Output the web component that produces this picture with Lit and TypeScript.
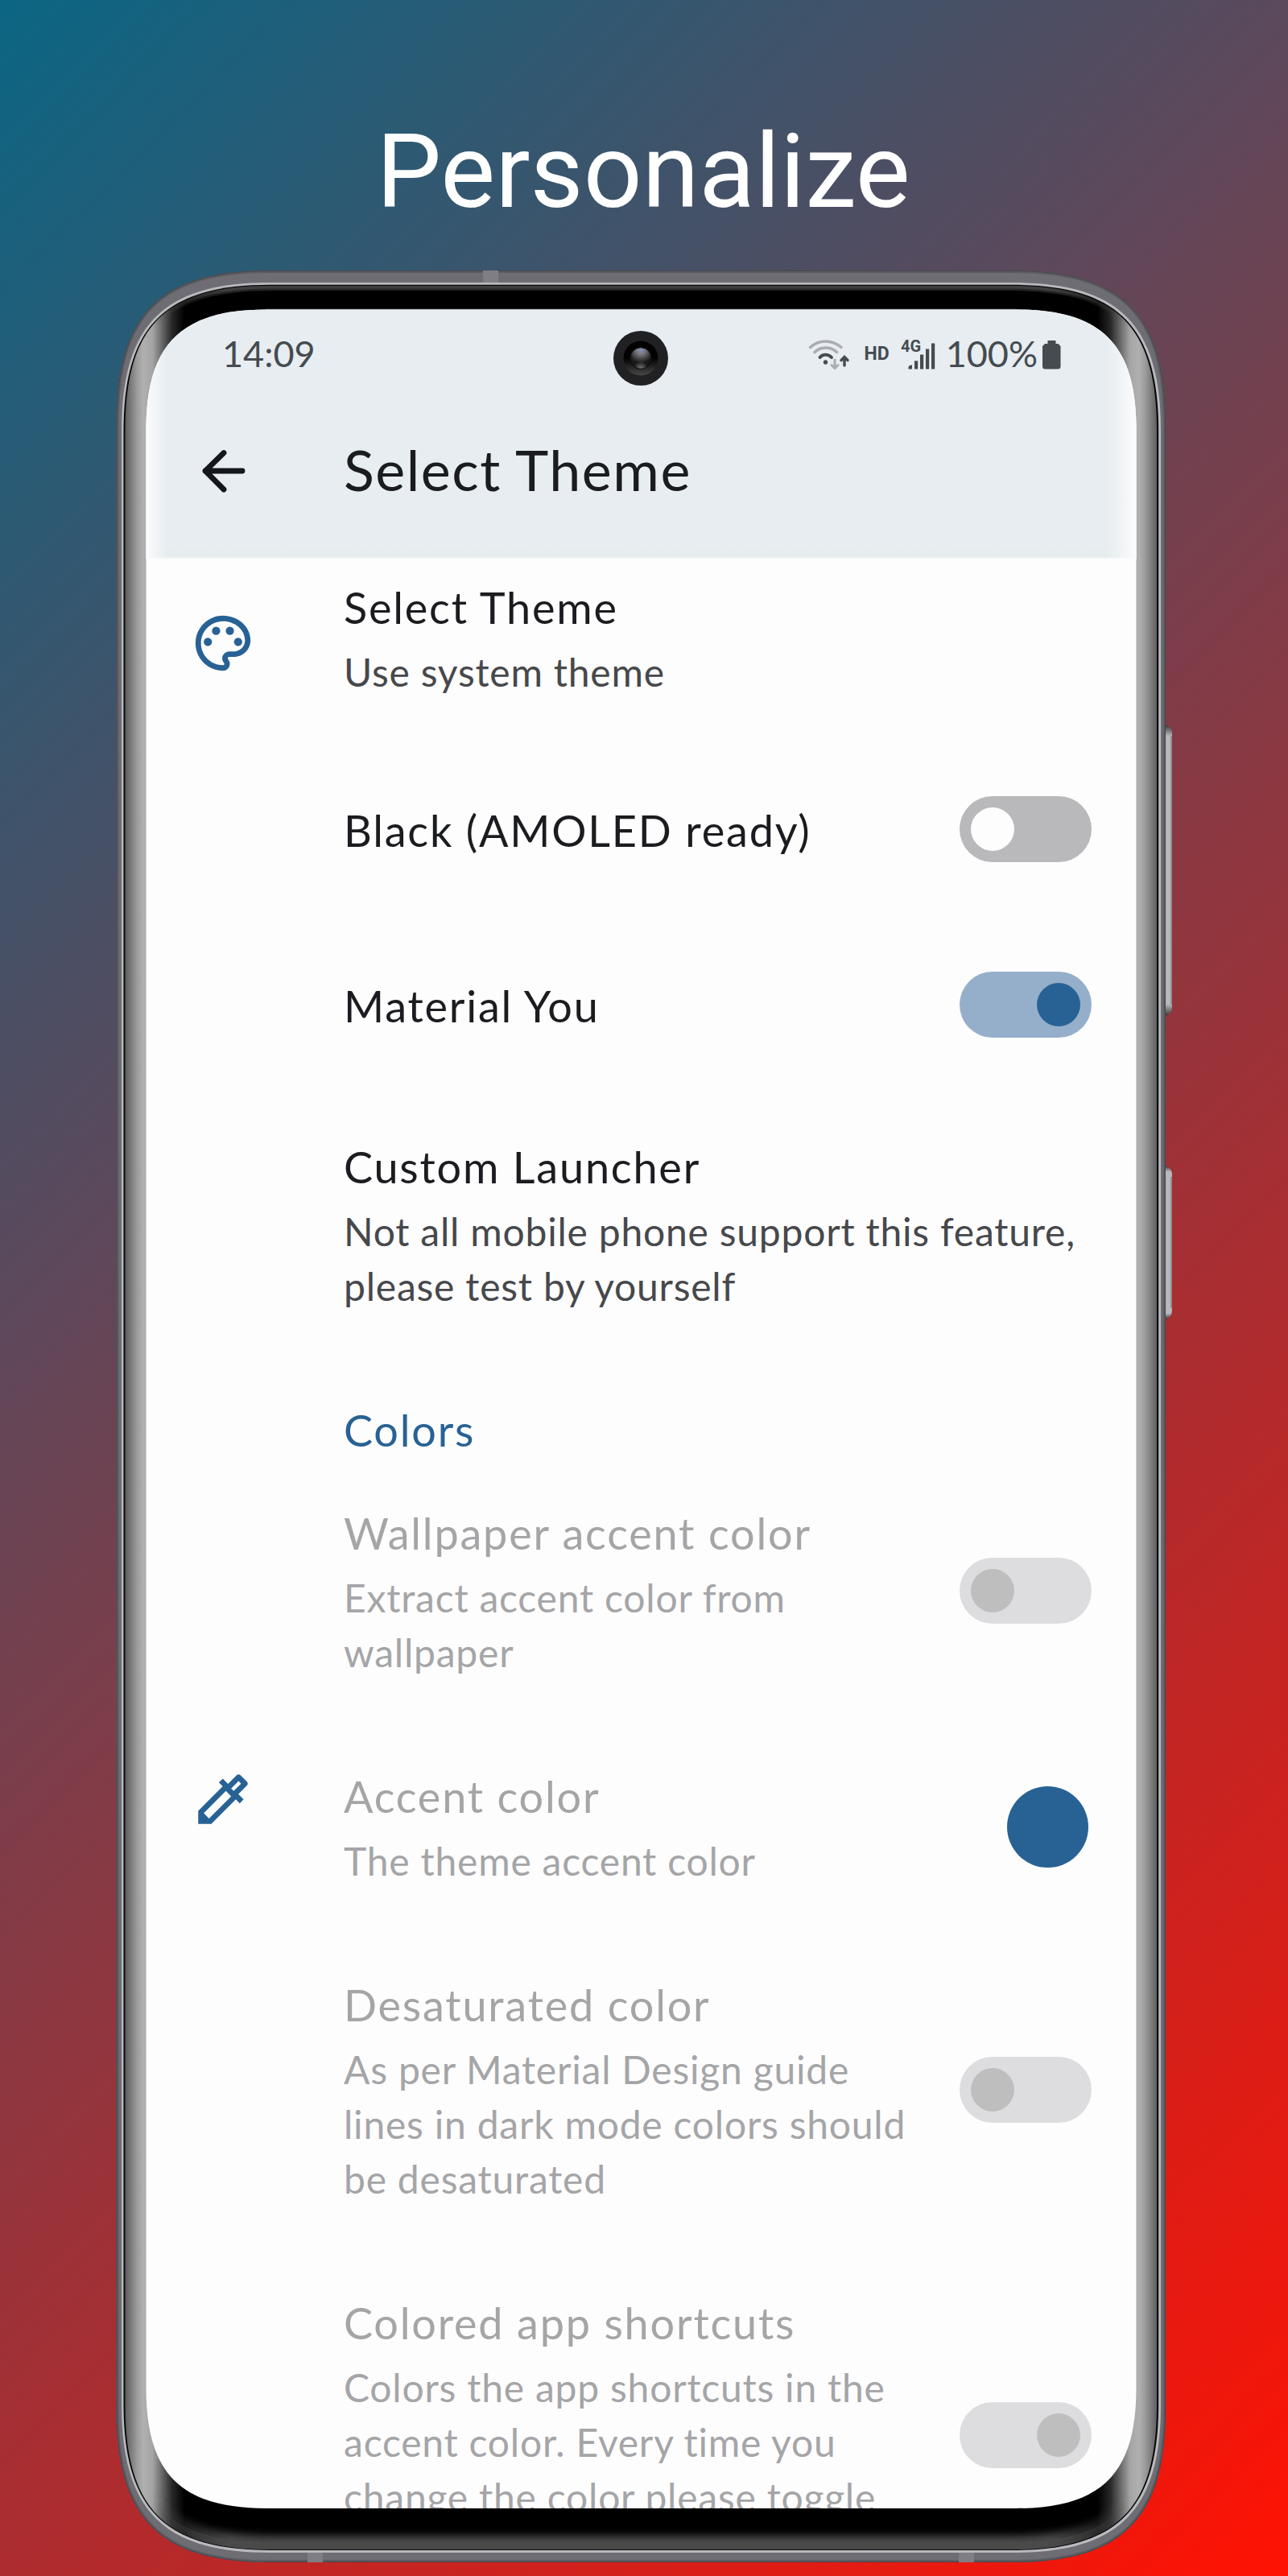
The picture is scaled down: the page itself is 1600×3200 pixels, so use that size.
import { LitElement, html, css, svg, nothing, TemplateResult } from "lit";
import { customElement, property } from "lit/decorators.js";
import { classMap } from "lit/directives/class-map.js";

type SwitchState = "off" | "on" | "disabled-off" | "disabled-on";

interface Setting {
  title: string;
  lines?: string[];
  icon?: "palette" | "dropper";
  control?: SwitchState | "swatch";
  disabled?: boolean;
  kind?: "single" | "header" | "last";
}

const SETTINGS: Setting[] = [
  { title: "Select Theme", lines: ["Use system theme"], icon: "palette" },
  { title: "Black (AMOLED ready)", control: "off", kind: "single" },
  { title: "Material You", control: "on", kind: "single" },
  {
    title: "Custom Launcher",
    lines: ["Not all mobile phone support this feature,", "please test by yourself"],
  },
  { title: "Colors", kind: "header" },
  {
    title: "Wallpaper accent color",
    lines: ["Extract accent color from", "wallpaper"],
    control: "disabled-off",
    disabled: true,
  },
  {
    title: "Accent color",
    lines: ["The theme accent color"],
    icon: "dropper",
    control: "swatch",
    disabled: true,
  },
  {
    title: "Desaturated color",
    lines: ["As per Material Design guide", "lines in dark mode colors should", "be desaturated"],
    control: "disabled-off",
    disabled: true,
  },
  {
    title: "Colored app shortcuts",
    lines: ["Colors the app shortcuts in the", "accent color. Every time you", "change the color please toggle"],
    control: "disabled-on",
    disabled: true,
    kind: "last",
  },
];

/** Rounded rectangle with continuous-curvature corners. */
function squircle(l: number, t: number, r: number, b: number, reach: number, ctl: number): string {
  return [
    `M${l + reach} ${t}H${r - reach}`,
    `C${r - ctl} ${t} ${r} ${t + ctl} ${r} ${t + reach}`,
    `V${b - reach}`,
    `C${r} ${b - ctl} ${r - ctl} ${b} ${r - reach} ${b}`,
    `H${l + reach}`,
    `C${l + ctl} ${b} ${l} ${b - ctl} ${l} ${b - reach}`,
    `V${t + reach}`,
    `C${l} ${t + ctl} ${l + ctl} ${t} ${l + reach} ${t}Z`,
  ].join("");
}

const BODY = squircle(144.5, 336, 1448, 3183, 190, 54);
const RIM = squircle(151, 351, 1442, 3171, 184, 52);
const GROOVE = squircle(153.5, 353.8, 1439.2, 3168, 182, 51);
const BEZEL = squircle(155.5, 355, 1437, 3167, 180, 50);
const GLASS = squircle(181.5, 384.5, 1411.5, 3116, 150, 43);

@customElement("phone-frame")
export class PhoneFrame extends LitElement {
  static styles = css`
    :host { display: block; width: 1600px; height: 3200px; }
    svg { display: block; }
  `;

  render() {
    return html`<svg width="1600" height="3200" viewBox="0 0 1600 3200">
      <defs>
        <linearGradient id="side" gradientUnits="userSpaceOnUse" x1="155" x2="1438" y1="0" y2="0">
          <stop offset="0" stop-color="#5c5c5c" />
          <stop offset="0.006" stop-color="#7c7c7c" />
          <stop offset="0.012" stop-color="#9c9c9c" />
          <stop offset="0.018" stop-color="#b0b0b0" />
          <stop offset="0.027" stop-color="#a4a4a4" />
          <stop offset="0.046" stop-color="#262626" />
          <stop offset="0.058" stop-color="#000" />
          <stop offset="0.942" stop-color="#000" />
          <stop offset="0.954" stop-color="#262626" />
          <stop offset="0.973" stop-color="#a4a4a4" />
          <stop offset="0.982" stop-color="#b0b0b0" />
          <stop offset="0.988" stop-color="#9c9c9c" />
          <stop offset="0.994" stop-color="#7c7c7c" />
          <stop offset="1" stop-color="#5c5c5c" />
        </linearGradient>
        <linearGradient id="band" gradientUnits="userSpaceOnUse" x1="190" x2="1402" y1="0" y2="0">
          <stop offset="0" stop-color="#4a4a4a" stop-opacity="0" />
          <stop offset="0.08" stop-color="#4a4a4a" />
          <stop offset="0.92" stop-color="#4a4a4a" />
          <stop offset="1" stop-color="#4a4a4a" stop-opacity="0" />
        </linearGradient>
        <linearGradient id="key" x1="0" x2="0" y1="0" y2="1">
          <stop offset="0" stop-color="#333" />
          <stop offset="0.04" stop-color="#b9b9bc" />
          <stop offset="0.96" stop-color="#b9b9bc" />
          <stop offset="1" stop-color="#333" />
        </linearGradient>
        <filter id="soft" filterUnits="userSpaceOnUse" x="100" y="300" width="1400" height="2900">
          <feGaussianBlur stdDeviation="5" />
        </filter>
        <clipPath id="bezelClip"><path d=${BEZEL} /></clipPath>
        <clipPath id="bodyClip"><path d=${BODY} /></clipPath>
        <clipPath id="lower"><rect x="150" y="2980" width="1300" height="200" /></clipPath>
        <clipPath id="upper"><rect x="150" y="340" width="1300" height="180" /></clipPath>
      </defs>
      <path d="M1447 900q9 2 9 12v338q0 10 -9 12z" fill="url(#key)" />
      <path d="M1447 1448q9 2 9 12v167q0 10 -9 12z" fill="url(#key)" />
      <path d="M1455 914v334M1455 1462v163" stroke="#8f8f93" stroke-width="2" />
      <path d=${BODY} fill="#6e6d74" />
      <g clip-path="url(#bodyClip)">
        <path d=${BODY} fill="none" stroke="#5c5c62" stroke-width="6" />
        <path d=${BODY} fill="none" stroke="#47474c" stroke-width="2" />
        <path d="M600 336h19v16h-19zM382 3169h19v14h-19zM1191 3169h19v14h-19z" fill="#7f7e84" />
      </g>
      <path d=${RIM} fill="#b8babd" />
      <path d=${GROOVE} fill="#080808" />
      <path d=${BEZEL} fill="url(#side)" />
      <g clip-path="url(#bezelClip)">
        <g clip-path="url(#lower)">
          <path d=${BEZEL} fill="none" stroke="url(#band)" stroke-width="34" filter="url(#soft)" />
          <path d=${BEZEL} fill="none" stroke="url(#band)" stroke-opacity="0.7" stroke-width="18" />
        </g>
        <g clip-path="url(#upper)">
          <path d=${BEZEL} fill="none" stroke="url(#band)" stroke-opacity="0.5" stroke-width="12" />
          <path d=${BEZEL} fill="none" stroke="url(#band)" stroke-opacity="0.7" stroke-width="7" />
        </g>
      </g>
      <path d=${GLASS} fill="#fdfdfe" />
      <path d="M330 384.3H1262" stroke="#8b8e90" stroke-width="1" />
    </svg>`;
  }
}

@customElement("toggle-switch")
export class ToggleSwitch extends LitElement {
  @property() state: SwitchState = "off";

  static styles = css`
    :host { display: block; }
    .track {
      display: flex;
      box-sizing: border-box;
      width: 164px;
      height: 82px;
      padding: 14px;
      border-radius: 41px;
      background: #b9b9bb;
    }
    .thumb { width: 54px; height: 54px; border-radius: 50%; background: #fdfdfe; }
    .on, .disabled-on { justify-content: flex-end; }
    .on { background: #95afcb; }
    .on .thumb { background: #286294; }
    .disabled-off, .disabled-on { background: #dddddf; }
    .disabled-off .thumb, .disabled-on .thumb { background: #bebebf; }
  `;

  render() {
    return html`<div class="track ${this.state}"><div class="thumb"></div></div>`;
  }
}

const ICONS: Record<string, TemplateResult> = {
  palette: svg`
    <path d="M12 22C6.49 22 2 17.51 2 12S6.49 2 12 2s10 4.04 10 9c0 3.31-2.69 6-6 6h-1.77c-.28 0-.5.22-.5.5 0 .12.05.23.13.33.41.47.64 1.06.64 1.67A2.5 2.5 0 0 1 12 22zm0-18c-4.41 0-8 3.59-8 8s3.59 8 8 8c.28 0 .5-.22.5-.5a.54.54 0 0 0-.14-.35c-.41-.46-.63-1.05-.63-1.65a2.5 2.5 0 0 1 2.5-2.5H16c2.21 0 4-1.79 4-4 0-3.86-3.59-7-8-7z"/>
    <circle cx="6.5" cy="11.5" r="1.5"/><circle cx="9.5" cy="7.5" r="1.5"/>
    <circle cx="14.5" cy="7.5" r="1.5"/><circle cx="17.5" cy="11.5" r="1.5"/>` as unknown as TemplateResult,
  dropper: svg`
    <path d="M17.66 5.41l.92.92-2.69 2.69-.92-.92 2.69-2.69M17.67 3c-.26 0-.51.1-.71.29l-3.12 3.12-1.93-1.91-1.41 1.41 1.42 1.42L3 16.25V21h4.75l8.92-8.92 1.42 1.42 1.41-1.41-1.92-1.92 3.12-3.12c.4-.4.4-1.02.01-1.41l-2.34-2.34c-.2-.19-.45-.29-.7-.29zM6.92 19L5 17.08l8.06-8.06 1.92 1.92L6.92 19z"/>` as unknown as TemplateResult,
};

@customElement("app-root")
export class AppRoot extends LitElement {
  static styles = css`
    :host {
      display: block;
      width: 1600px;
      height: 3200px;
      overflow: hidden;
      font-family: Lato, "Open Sans", sans-serif;
      font-variant-ligatures: none;
    }
    .stage {
      position: relative;
      box-sizing: border-box;
      width: 1600px;
      height: 3200px;
      padding: 138px 0 0 181px;
      background: linear-gradient(135deg, #0b6684 0%, #5b495c 33.3%, #ad2c2f 66.6%, #ff1203 100%);
    }
    .frame { position: absolute; inset: 0; }
    .headline {
      position: relative;
      width: 1236px;
      height: 150px;
      margin: 0 0 96px;
      text-align: center;
      font: 400 128px/150px Roboto, sans-serif;
      color: #fff;
    }
    .screen {
      position: relative;
      width: 1231px;
      height: 2732px;
      overflow: hidden;
      color: #1b1c1f;
    }
    .bar {
      box-sizing: border-box;
      height: 310px;
      padding-top: 30px;
      background:
        linear-gradient(90deg, #fbfcfd 0, rgba(251, 252, 253, 0) 26px, rgba(251, 252, 253, 0) 1195px, #fbfcfd 1231px),
        linear-gradient(180deg, #e7edf1 0, #e7edf1 290px, #e7edee 307px, #f4f6f7 310px);
    }
    .status {
      display: flex;
      align-items: center;
      height: 50px;
      padding: 0 94px 0 95px;
      color: #454b50;
      font-size: 45px;
    }
    .clock { flex: 1; }
    .hd { margin: 2px 14px 0 20px; font: 700 23px/50px Roboto, sans-serif; }
    .pct { margin: 0 6px 0 12px; }
    .status svg { display: block; fill: currentColor; overflow: visible; }
    .signal { font: 700 20px Roboto, sans-serif; }
    .title-row { display: flex; align-items: center; height: 100px; margin-top: 71px; padding-left: 66px; }
    .title-row h1 {
      margin: 0 0 0 120px;
      padding-bottom: 4px;
      font-size: 70px;
      font-weight: 400;
      line-height: 100px;
      letter-spacing: 1.5px;
    }
    .arrow { fill: none; stroke: #14181d; stroke-width: 6.8; stroke-linecap: round; stroke-linejoin: round; }
    .camera { position: absolute; left: 581px; top: 27px; }
    .list { margin-top: -31px; }
    .item {
      display: grid;
      grid-template-columns: 82px 1fr 164px;
      align-items: center;
      box-sizing: border-box;
      padding: 56px 56px 53px 55px;
    }
    .single { height: 218px; padding-block: 2px 0; }
    .header { height: 128px; padding: 56px 56px 0 55px; color: #286294; }
    .last { padding-bottom: 122px; }
    .icon { align-self: start; width: 82px; height: 82px; fill: #286294; }
    .palette { margin: 39px 0 -39px; }
    .dropper { margin: -2px 0 2px; }
    .copy { grid-column: 2; padding-left: 109px; }
    .name { font-size: 54px; line-height: 72px; letter-spacing: 1.8px; white-space: nowrap; }
    .detail {
      margin-top: 10px;
      font-size: 48px;
      line-height: 68px;
      letter-spacing: 0.78px;
      color: #47484b;
      white-space: nowrap;
    }
    .disabled .name, .disabled .detail { color: #a5a5a7; }
    .control { grid-column: 3; justify-self: end; margin-top: -4px; }
    .last .control { margin-bottom: -68px; }
    .swatch { width: 101px; height: 101px; margin-right: 4px; border-radius: 50%; background: #286294; }
  `;

  private renderItem(s: Setting) {
    const cls = {
      item: true,
      single: s.kind === "single",
      header: s.kind === "header",
      last: s.kind === "last",
      disabled: !!s.disabled,
    };
    return html`<div class=${classMap(cls)}>
      ${s.icon ? html`<svg class="icon ${s.icon}" viewBox="0 0 24 24">${ICONS[s.icon]}</svg>` : nothing}
      <div class="copy">
        <div class="name">${s.title}</div>
        ${s.lines ? html`<div class="detail">${s.lines.map((l) => html`<div>${l}</div>`)}</div>` : nothing}
      </div>
      ${s.control === "swatch"
        ? html`<div class="control swatch"></div>`
        : s.control
          ? html`<toggle-switch class="control" .state=${s.control}></toggle-switch>`
          : nothing}
    </div>`;
  }

  private renderStatus() {
    return html`<div class="status">
      <span class="clock">14:09</span>
      <svg width="50" height="40" viewBox="0 0 50 40">
        <g fill="none" stroke-linecap="round">
          <path d="M3.5 12.5Q12 5 22.5 5T42 12.5" stroke="#a9adb1" stroke-width="3.4" />
          <path d="M9 18.5Q14.5 13 22.5 13T36.5 18.5" stroke="#a9adb1" stroke-width="3.6" />
          <path d="M15.5 25Q18 21.6 22.5 21.6T30 25" stroke="#454b50" stroke-width="3.8" />
          <path d="M34 28V38M30 34.5L34 38.5L38 34.5" stroke="#a9adb1" stroke-width="3" />
          <path d="M46 35V25M42 28.5L46 24.5L50 28.5" stroke="#454b50" stroke-width="3.4" />
        </g>
        <circle cx="22.5" cy="31" r="2.7" />
      </svg>
      <span class="hd">HD</span>
      <svg width="44" height="40" viewBox="0 0 44 40">
        <text class="signal" x="0" y="18">4G</text>
        <path d="M9.5 39.5v-2q0-3 4.5-3v5zM17 29.2h4.2v10.3h-4.2zM24 21.5h4.2v18h-4.2zM31 14.5h4.2v25h-4.2zM38 7.5h4.2v32h-4.2z" />
      </svg>
      <span class="pct">100%</span>
      <svg width="23" height="40" viewBox="0 0 23 40">
        <path d="M6.5 4h10v4H19.5l3 3V36q0 3.500-3.500 3.500H3.500Q0 39.500 0 36V11l3-3H6.500z" />
      </svg>
    </div>`;
  }

  render() {
    return html`<div class="stage">
      <phone-frame class="frame"></phone-frame>
      <h2 class="headline">Personalize</h2>
      <div class="screen" style="clip-path: path('${squircle(0.5, 0.5, 1230.5, 2732, 150, 43)}')">
        <div class="bar">
          ${this.renderStatus()}
          <div class="title-row">
            <svg class="arrow" width="60" height="60" viewBox="0 0 60 60">
              <path d="M54 30H8M31 7.5L8 30L31 53" />
            </svg>
            <h1>Select Theme</h1>
          </div>
        </div>
        <div class="list">${SETTINGS.map((s) => this.renderItem(s))}</div>
        <svg class="camera" width="68" height="68" viewBox="-34 -34 68 68">
          <defs>
            <linearGradient id="well" x1="0" x2="0" y1="0" y2="1">
              <stop offset="0.5" stop-color="#020202" />
              <stop offset="1" stop-color="#484848" />
            </linearGradient>
            <radialGradient id="lens" cx="0.5" cy="0.12" r="0.6">
              <stop offset="0" stop-color="#8797b8" />
              <stop offset="0.4" stop-color="#707076" />
              <stop offset="1" stop-color="#181818" />
            </radialGradient>
            <radialGradient id="glow" cx="0.5" cy="1" r="0.35">
              <stop offset="0" stop-color="#777" />
              <stop offset="1" stop-color="#777" stop-opacity="0" />
            </radialGradient>
          </defs>
          <circle r="34" fill="#212123" />
          <circle r="21.5" fill="url(#well)" />
          <circle r="13.3" fill="url(#lens)" stroke="#0a0a0a" />
          <circle r="12.8" fill="url(#glow)" />
        </svg>
      </div>
    </div>`;
  }
}
